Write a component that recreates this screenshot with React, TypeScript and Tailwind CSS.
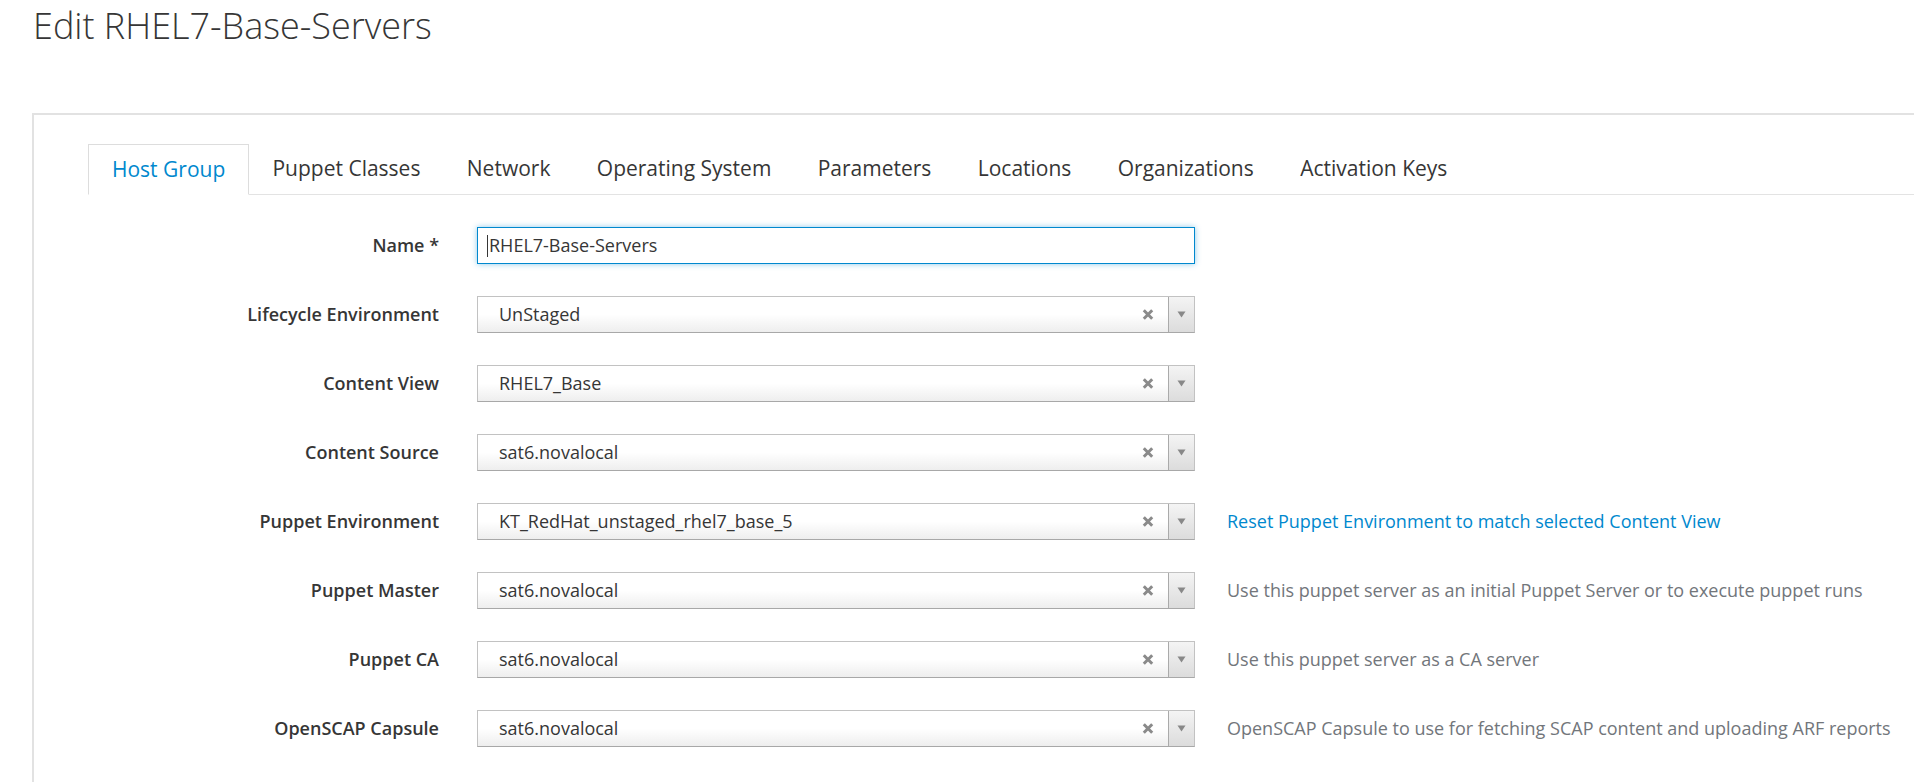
import React from 'react';

const tabs = [
  'Host Group',
  'Puppet Classes',
  'Network',
  'Operating System',
  'Parameters',
  'Locations',
  'Organizations',
  'Activation Keys',
];

interface SelectRow {
  label: string;
  value: string;
  help?: string;
  link?: boolean;
}

const rows: SelectRow[] = [
  { label: 'Lifecycle Environment', value: 'UnStaged' },
  { label: 'Content View', value: 'RHEL7_Base' },
  { label: 'Content Source', value: 'sat6.novalocal' },
  {
    label: 'Puppet Environment',
    value: 'KT_RedHat_unstaged_rhel7_base_5',
    help: 'Reset Puppet Environment to match selected Content View',
    link: true,
  },
  {
    label: 'Puppet Master',
    value: 'sat6.novalocal',
    help: 'Use this puppet server as an initial Puppet Server or to execute puppet runs',
  },
  { label: 'Puppet CA', value: 'sat6.novalocal', help: 'Use this puppet server as a CA server' },
  {
    label: 'OpenSCAP Capsule',
    value: 'sat6.novalocal',
    help: 'OpenSCAP Capsule to use for fetching SCAP content and uploading ARF reports',
  },
];

function Select({ value }: { value: string }) {
  return (
    <div className="flex h-[37px] w-[718px] border border-[#c2c2c2] border-b-[#a8a8a8] bg-gradient-to-b from-white from-50% to-[#eeeeee]">
      <div className="flex flex-1 items-center pl-[21px] text-[18px] text-[#363636]">{value}</div>
      {/* clear button */}
      <div className="flex w-[40px] items-center justify-center">
        <svg width="12" height="11" viewBox="0 0 12 11">
          <path d="M1.8 1.3 L10.2 9.7 M10.2 1.3 L1.8 9.7" stroke="#8a8a8a" strokeWidth="3" />
        </svg>
      </div>
      <div className="flex w-[26px] items-center justify-center border-l border-[#aaaaaa] bg-gradient-to-b from-[#f4f4f4] to-[#dcdcdc]">
        <svg width="9" height="7" viewBox="0 0 9 7">
          <path d="M0.5 0.5 L8.5 0.5 L4.5 6.5 Z" fill="#888888" />
        </svg>
      </div>
    </div>
  );
}

export default function App() {
  return (
    <div className="min-h-[782px] overflow-hidden bg-white font-['Open_Sans',sans-serif] text-[#363636]">
      <h1 className="pl-[33px] pt-[2px] text-[36px] font-light leading-[48px] text-[#363636]">
        Edit RHEL7-Base-Servers
      </h1>

      <div className="ml-[32px] mt-[63px] h-[669px] w-[1900px] border-l-2 border-t-2 border-[#e2e2e2] pl-[54px] pt-[29px]">
        {/* tabs */}
        <div className="flex h-[51px] border-b border-[#e3e3e3]">
          {tabs.map((t, i) =>
            i === 0 ? (
              <div
                key={t}
                className="-mb-px flex items-center border border-[#dddddd] border-b-white bg-white px-[23px] text-[21px] text-[#0088ce]"
              >
                {t}
              </div>
            ) : (
              <div key={t} className="flex items-center px-[23.2px] text-[21px] text-[#363636]">
                {t}
              </div>
            ),
          )}
        </div>

        {/* form */}
        <div className="mt-[32px] flex flex-col gap-[32px]">
          <div className="flex items-center">
            <label className="w-[389px] pr-[38px] text-right text-[18px] font-semibold">Name *</label>
            <div className="flex h-[37px] w-[718px] items-center border border-[#0088ce] pl-[9px] text-[18px] shadow-[0_0_6px_rgba(0,136,206,0.45)]">
              <span className="mr-[1px] h-[22px] w-px bg-[#363636]" />
              RHEL7-Base-Servers
            </div>
          </div>

          {rows.map((r) => (
            <div key={r.label} className="flex items-center">
              <label className="w-[389px] pr-[38px] text-right text-[18px] font-semibold">{r.label}</label>
              <Select value={r.value} />
              {r.help && (
                <span
                  className={`ml-[32px] whitespace-nowrap text-[18px] ${
                    r.link ? 'text-[#0088ce]' : 'text-[#72767b]'
                  }`}
                >
                  {r.help}
                </span>
              )}
            </div>
          ))}
        </div>
      </div>
    </div>
  );
}
